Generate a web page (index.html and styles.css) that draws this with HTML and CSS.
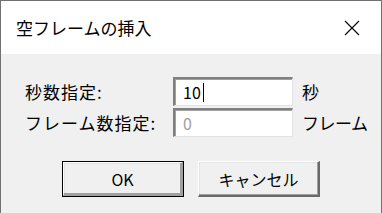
FILE: index.html
```html
<!DOCTYPE html>
<html lang="ja">
<head>
  <meta charset="UTF-8">
  <title>空フレームの挿入</title>
  <link rel="stylesheet" href="styles.css">
</head>
<body>
  <div class="window">
    <div class="titlebar">
      <span class="title">空フレームの挿入</span>
      <svg class="close" width="16" height="16" viewBox="0 0 16 16">
        <path d="M1 1 L15 15 M15 1 L1 15" stroke="#000" stroke-width="1.1" fill="none"/>
      </svg>
    </div>

    <div class="content">
      <div class="form">
        <label class="label">秒数指定:</label>
        <div class="field">10<span class="caret"></span></div>
        <span class="unit">秒</span>

        <label class="label">フレーム数指定:</label>
        <div class="field disabled">0</div>
        <span class="unit">フレーム</span>
      </div>

      <div class="buttons">
        <button class="btn default">OK</button>
        <button class="btn">キャンセル</button>
      </div>
    </div>
  </div>
</body>
</html>
```

FILE: styles.css
```css
* {
  box-sizing: border-box;
}

body {
  margin: 0;
  font-family: "Noto Sans CJK JP", "Noto Sans", sans-serif;
  color: #000;
}

.window {
  width: 382px;
  height: 213px;
  border: 1px solid #707070;
  border-bottom: none;
  background: #f0f0f0;
  display: flex;
  flex-direction: column;
}

.titlebar {
  height: 53px;
  background: #fff;
  display: flex;
  align-items: center;
  justify-content: space-between;
  padding: 0 21px 0 15px;
}

.title {
  font-size: 17px;
  line-height: 1;
}

.close {
  display: block;
}

.content {
  padding: 23px 0 0 24px;
}

.form {
  display: grid;
  grid-template-columns: 139px 120px auto;
  column-gap: 9px;
  row-gap: 2px;
  align-items: center;
  font-size: 17px;
}

.label {
  letter-spacing: 1px;
  line-height: 1;
}

.unit {
  line-height: 1;
  letter-spacing: -0.5px;
}

.field {
  height: 29px;
  background: #fff;
  border-style: solid;
  border-width: 2px 1px 1px 2px;
  border-color: #808080 #e3e3e3 #e3e3e3 #808080;
  box-shadow: inset 1px 1px 0 #a0a0a0;
  font-size: 16px;
  line-height: 25px;
  padding-left: 8px;
  display: flex;
  align-items: center;
}

.field.disabled {
  color: #a0a0a0;
  background: #fff;
}

.caret {
  width: 1px;
  height: 19px;
  background: #000;
  margin-left: 2px;
}

.buttons {
  display: flex;
  gap: 14px;
  margin-top: 24px;
  padding-left: 37px;
}

.btn {
  width: 122px;
  height: 36px;
  font-family: inherit;
  font-size: 16px;
  color: #000;
  background: #f0f0f0;
  border-style: solid;
  border-width: 1px 2px 2px 1px;
  border-color: #fff #696969 #696969 #fff;
  box-shadow: inset -1px -1px 0 #a0a0a0, inset 1px 1px 0 #e3e3e3;
  padding: 0;
}

.btn.default {
  outline: 1px solid #000;
  outline-offset: -1px;
  border-color: #fff #a0a0a0 #a0a0a0 #fff;
  border-width: 2px 3px 3px 2px;
}
```
